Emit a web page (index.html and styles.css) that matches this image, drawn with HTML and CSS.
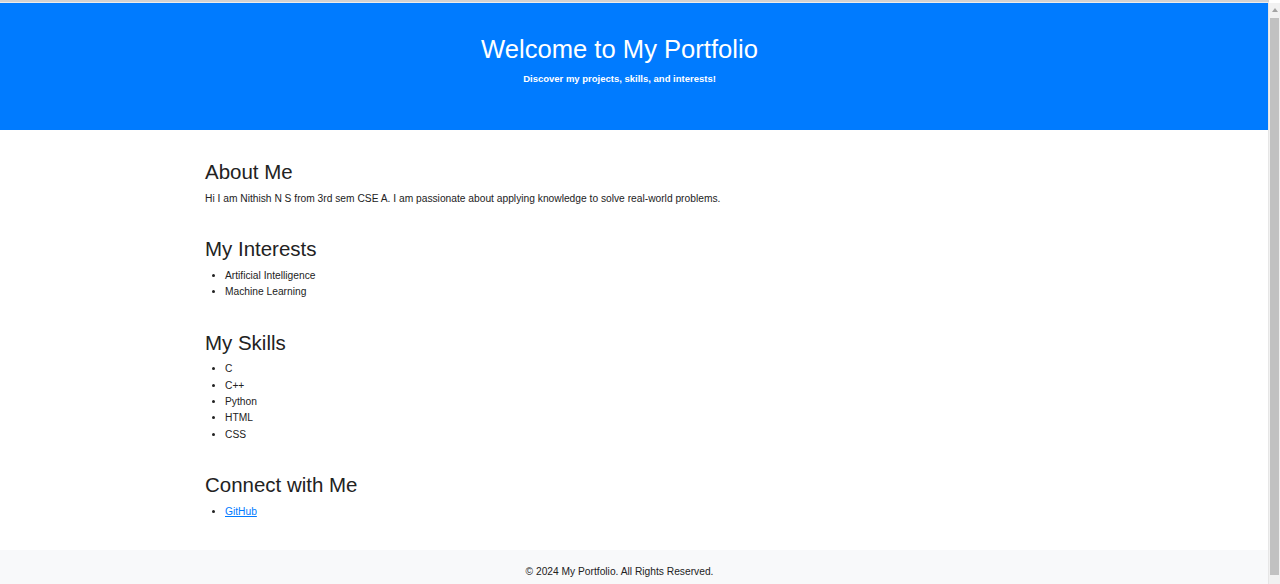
FILE: index.html
```html
<!DOCTYPE html>
<html lang="en">

<head>
    <meta charset="UTF-8">
    <meta name="viewport" content="width=device-width, initial-scale=1.0">
    <title>My Portfolio</title>
    <link rel="stylesheet" href="styles.css">
</head>

<body>
    <div class="top-edge"></div>

    <header class="site-header">
        <h1>Welcome to My Portfolio</h1>
        <p>Discover my projects, skills, and interests!</p>
    </header>

    <main class="container">
        <section class="block">
            <h2>About Me</h2>
            <p>Hi I am Nithish N S from 3rd sem CSE A. I am passionate about applying knowledge to solve real-world problems.</p>
        </section>

        <section class="block">
            <h2>My Interests</h2>
            <ul>
                <li>Artificial Intelligence</li>
                <li>Machine Learning</li>
            </ul>
        </section>

        <section class="block">
            <h2>My Skills</h2>
            <ul>
                <li>C</li>
                <li>C++</li>
                <li>Python</li>
                <li>HTML</li>
                <li>CSS</li>
            </ul>
        </section>

        <section class="block">
            <h2>Connect with Me</h2>
            <ul>
                <li><a href="#">GitHub</a></li>
            </ul>
        </section>
    </main>

    <footer class="site-footer">
        <p>&copy; 2024 My Portfolio. All Rights Reserved.</p>
    </footer>

    <!-- fake browser scrollbar from the screenshot -->
    <div class="scrollbar">
        <div class="scroll-arrow"></div>
        <div class="scroll-thumb"></div>
    </div>
</body>

</html>
```

FILE: styles.css
```css
html {
    overflow: hidden;
}

body {
    font-family: "Liberation Sans", Arial, sans-serif;
    margin: 0;
    padding: 0 11px 0 0;
    color: #333;
    background-color: #fff;
    line-height: 1.6;
}

.top-edge {
    height: 2px;
    background-color: #d2d2d2;
    border-bottom: 1px solid #ececec;
}

.site-header {
    background-color: #007bff;
    color: white;
    text-align: center;
    padding: 24px 30px 44px 0;
}

.site-header h1 {
    margin: 0;
    font-size: 25.6px;
    font-weight: normal;
    line-height: 44px;
}

.site-header p {
    margin: 0;
    font-size: 9.5px;
    font-weight: bold;
    line-height: 15.4px;
}

.container {
    padding: 30px 0 30px 205px;
}

.block {
    margin-bottom: 30px;
}

.block:last-child {
    margin-bottom: 0;
}

.block h2 {
    margin: 0 0 7px 0;
    font-size: 20.48px;
    font-weight: normal;
    line-height: 1.15;
    color: #222;
}

.block p {
    margin: 0;
    font-size: 10.24px;
    color: #222;
}

.block ul {
    margin: 0;
    padding-left: 20px;
    font-size: 10.24px;
    color: #222;
}

.block a {
    color: #007bff;
}

.site-footer {
    background-color: #f8f9fa;
    text-align: center;
    padding: 14px 30px 12px 0;
}

.site-footer p {
    margin: 0;
    font-size: 10.24px;
    color: #222;
}

.scrollbar {
    position: fixed;
    top: 3px;
    right: 0;
    bottom: 0;
    width: 11px;
    background-color: #f1f1f1;
    border-left: 1px solid #e6e6e6;
}

.scroll-arrow {
    width: 0;
    height: 0;
    margin: 5px auto 0;
    border-left: 3px solid transparent;
    border-right: 3px solid transparent;
    border-bottom: 4px solid #a3a3a3;
}

.scroll-thumb {
    position: absolute;
    top: 15px;
    left: 1px;
    right: 1px;
    bottom: 9px;
    background-color: #c1c1c1;
}
```
